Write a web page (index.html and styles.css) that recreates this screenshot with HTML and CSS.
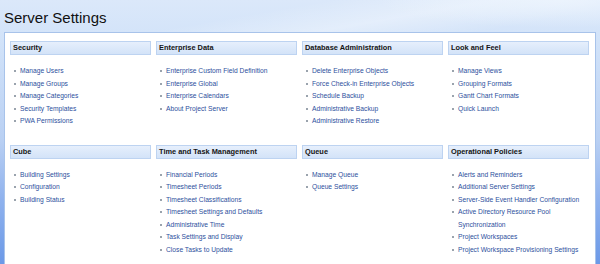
FILE: index.html
```html
<!DOCTYPE html>
<html>
<head>
<meta charset="utf-8">
<title>Server Settings</title>
<link rel="stylesheet" href="styles.css">
</head>
<body>
<div class="page">
  <h1 class="title">Server Settings</h1>
  <div class="panel">
    <div class="grid">
      <section class="group">
        <h2 class="group-head">Security</h2>
        <ul class="links">
          <li><a href="#">Manage Users</a></li>
          <li><a href="#">Manage Groups</a></li>
          <li><a href="#">Manage Categories</a></li>
          <li><a href="#">Security Templates</a></li>
          <li><a href="#">PWA Permissions</a></li>
        </ul>
      </section>
      <section class="group">
        <h2 class="group-head">Enterprise Data</h2>
        <ul class="links">
          <li><a href="#">Enterprise Custom Field Definition</a></li>
          <li><a href="#">Enterprise Global</a></li>
          <li><a href="#">Enterprise Calendars</a></li>
          <li><a href="#">About Project Server</a></li>
        </ul>
      </section>
      <section class="group">
        <h2 class="group-head">Database Administration</h2>
        <ul class="links">
          <li><a href="#">Delete Enterprise Objects</a></li>
          <li><a href="#">Force Check-in Enterprise Objects</a></li>
          <li><a href="#">Schedule Backup</a></li>
          <li><a href="#">Administrative Backup</a></li>
          <li><a href="#">Administrative Restore</a></li>
        </ul>
      </section>
      <section class="group">
        <h2 class="group-head">Look and Feel</h2>
        <ul class="links">
          <li><a href="#">Manage Views</a></li>
          <li><a href="#">Grouping Formats</a></li>
          <li><a href="#">Gantt Chart Formats</a></li>
          <li><a href="#">Quick Launch</a></li>
        </ul>
      </section>
      <section class="group">
        <h2 class="group-head">Cube</h2>
        <ul class="links">
          <li><a href="#">Building Settings</a></li>
          <li><a href="#">Configuration</a></li>
          <li><a href="#">Building Status</a></li>
        </ul>
      </section>
      <section class="group">
        <h2 class="group-head">Time and Task Management</h2>
        <ul class="links">
          <li><a href="#">Financial Periods</a></li>
          <li><a href="#">Timesheet Periods</a></li>
          <li><a href="#">Timesheet Classifications</a></li>
          <li><a href="#">Timesheet Settings and Defaults</a></li>
          <li><a href="#">Administrative Time</a></li>
          <li><a href="#">Task Settings and Display</a></li>
          <li><a href="#">Close Tasks to Update</a></li>
        </ul>
      </section>
      <section class="group">
        <h2 class="group-head">Queue</h2>
        <ul class="links">
          <li><a href="#">Manage Queue</a></li>
          <li><a href="#">Queue Settings</a></li>
        </ul>
      </section>
      <section class="group">
        <h2 class="group-head">Operational Policies</h2>
        <ul class="links">
          <li><a href="#">Alerts and Reminders</a></li>
          <li><a href="#">Additional Server Settings</a></li>
          <li><a href="#">Server-Side Event Handler Configuration</a></li>
          <li><a href="#">Active Directory Resource Pool Synchronization</a></li>
          <li><a href="#">Project Workspaces</a></li>
          <li><a href="#">Project Workspace Provisioning Settings</a></li>
        </ul>
      </section>
    </div>
  </div>
</div>
</body>
</html>
```

FILE: styles.css
```css
html, body {
  margin: 0;
  padding: 0;
  height: 100%;
}
body {
  font-family: "Liberation Sans", Arial, sans-serif;
  background: linear-gradient(to bottom, #dbe8fa 0px, #d2e3f9 40px, #b9d0f3 140px, #8fb2ee 200px, #6c99e7 264px);
  overflow: hidden;
}
.page {
  height: 264px;
  background:
    radial-gradient(ellipse 260px 40px at 560px 0px, rgba(236,244,253,0.9), rgba(236,244,253,0) 70%),
    linear-gradient(170deg, rgba(255,255,255,0) 40%, rgba(255,255,255,0.35) 60%, rgba(255,255,255,0) 80%);
  background-repeat: no-repeat;
  background-size: 100% 40px, 100% 40px;
}
.title {
  margin: 0;
  padding: 8px 0 0 4px;
  height: 24px;
  font-family: "Liberation Sans", Arial, sans-serif;
  font-weight: normal;
  font-size: 15px;
  line-height: 20px;
  color: #111;
}
.panel {
  margin: 0 4px;
  background: #fff;
  border: 1px solid #a8c3ea;
  border-bottom: none;
  height: 232px;
  padding: 8px 0 0 5px;
  box-sizing: border-box;
  overflow: hidden;
}
.grid {
  display: grid;
  grid-template-columns: repeat(4, 141px);
  column-gap: 5px;
  row-gap: 17px;
}
.group-head {
  margin: 0;
  height: 14px;
  box-sizing: border-box;
  border: 1px solid #bdd3f1;
  background: linear-gradient(to bottom, #e6effc, #d3e3f8);
  font-size: 7.4px;
  font-weight: bold;
  line-height: 12px;
  padding-left: 2px;
  color: #151515;
}
.links {
  list-style: none;
  margin: 10px 0 0 0;
  padding: 0 3px 0 10px;
}
.links li {
  position: relative;
  font-size: 6.7px;
  line-height: 12.5px;
}
.links li::before {
  content: "";
  position: absolute;
  left: -6px;
  top: 5px;
  width: 2px;
  height: 2px;
  background: #9aa3ad;
}
.links a {
  color: #2d4f9d;
  text-decoration: none;
}
```
